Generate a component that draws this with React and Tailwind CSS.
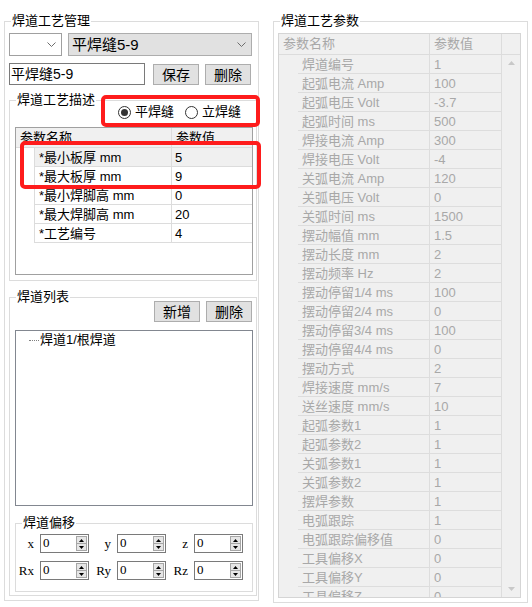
import React from "react";

const leftRows = [
  ["*最小板厚 mm", "5"],
  ["*最大板厚 mm", "9"],
  ["*最小焊脚高 mm", "0"],
  ["*最大焊脚高 mm", "20"],
  ["*工艺编号", "4"],
];

const rightRows = [
  ["焊道编号", "1"],
  ["起弧电流 Amp", "100"],
  ["起弧电压 Volt", "-3.7"],
  ["起弧时间 ms", "500"],
  ["焊接电流 Amp", "300"],
  ["焊接电压 Volt", "-4"],
  ["关弧电流 Amp", "120"],
  ["关弧电压 Volt", "0"],
  ["关弧时间 ms", "1500"],
  ["摆动幅值 mm", "1.5"],
  ["摆动长度 mm", "2"],
  ["摆动频率 Hz", "2"],
  ["摆动停留1/4 ms", "100"],
  ["摆动停留2/4 ms", "0"],
  ["摆动停留3/4 ms", "100"],
  ["摆动停留4/4 ms", "0"],
  ["摆动方式", "2"],
  ["焊接速度 mm/s", "7"],
  ["送丝速度 mm/s", "10"],
  ["起弧参数1", "1"],
  ["起弧参数2", "1"],
  ["关弧参数1", "1"],
  ["关弧参数2", "1"],
  ["摆焊参数", "1"],
  ["电弧跟踪", "1"],
  ["电弧跟踪偏移值", "0"],
  ["工具偏移X", "0"],
  ["工具偏移Y", "0"],
  ["工具偏移Z", "0"],
];

function Group({ title, className, children }) {
  return (
    <div className={`relative border border-[#dcdcdc] ${className}`}>
      <span className="absolute left-[6px] -top-[9px] bg-white px-[1px] text-[13px] leading-[16px] text-black">
        {title}
      </span>
      {children}
    </div>
  );
}

function Chevron() {
  return (
    <svg width="9" height="5" viewBox="0 0 9 5" className="shrink-0">
      <polyline points="0.5,0.5 4.5,4.5 8.5,0.5" fill="none" stroke="#6d6d6d" strokeWidth="1" />
    </svg>
  );
}

function Button({ children }) {
  return (
    <div className="w-[46px] h-[21px] bg-[#e1e1e1] border border-[#adadad] flex items-center justify-center text-[14px] leading-[18px]">
      {children}
    </div>
  );
}

function Spin({ label }) {
  return (
    <>
      <div className="text-right pr-[6px] font-['Liberation_Serif',serif] text-[13px] leading-[19px]" style={{ width: label.w }}>
        {label.t}
      </div>
      <div className="w-[49px] h-[19px] border border-[#7a7a7a] bg-white flex">
        <div className="flex-1 pl-[2px] text-[13px] leading-[16px] font-['Liberation_Serif',serif]">0</div>
        <div className="w-[11px] flex flex-col my-[1px] mr-[1px]">
          <div className="flex-1 bg-[#e6e6e6] border border-[#a6a6a6] flex items-center justify-center">
            <svg width="5" height="3" viewBox="0 0 5 3"><polygon points="2.5,0 5,3 0,3" fill="#000" /></svg>
          </div>
          <div className="flex-1 bg-[#e6e6e6] border border-[#a6a6a6] border-t-0 flex items-center justify-center">
            <svg width="5" height="3" viewBox="0 0 5 3"><polygon points="0,0 5,0 2.5,3" fill="#000" /></svg>
          </div>
        </div>
      </div>
    </>
  );
}

function Radio({ checked, label }) {
  return (
    <div className="flex items-center gap-[4px]">
      <div className="w-[13px] h-[13px] rounded-full border border-[#333] bg-white flex items-center justify-center">
        {checked && <div className="w-[7px] h-[7px] rounded-full bg-[#333]" />}
      </div>
      <span className="text-[13px] leading-[18px]">{label}</span>
    </div>
  );
}

export default function App() {
  return (
    <div className="relative w-[532px] h-[607px] overflow-hidden bg-white text-black font-['Liberation_Sans','Noto_Sans_CJK_SC',sans-serif] flex items-start gap-[14px] pl-[4px] pt-[21px]">
      {/* left panel */}
      <Group title="焊道工艺管理" className="w-[255px] h-[580px] shrink-0 pl-[4px] pt-[11px]">
        <div className="flex gap-[6px]">
          <div className="w-[53px] h-[23px] border border-[#a0a0a0] bg-white flex items-center justify-end pr-[5px]">
            <Chevron />
          </div>
          <div className="w-[184px] h-[23px] border border-[#adadad] bg-[#e1e1e1] flex items-center justify-between pl-[3px] pr-[5px]">
            <span className="text-[15px] leading-[18px]">平焊缝5-9</span>
            <Chevron />
          </div>
        </div>
        <div className="flex items-start mt-[7px]">
          <div className="w-[136px] h-[22px] border border-[#7a7a7a] bg-white pl-[1px] text-[14px] leading-[20px]">
            平焊缝5-9
          </div>
          <div className="flex gap-[6px] ml-[8px] mt-[1px]">
            <Button>保存</Button>
            <Button>删除</Button>
          </div>
        </div>

        <Group title="焊道工艺描述" className="w-[248px] h-[181px] mt-[15px]">
          <div className="flex gap-[11px] pl-[108px] mt-[2px] h-[18px] items-center">
            <Radio checked label="平焊缝" />
            <Radio label="立焊缝" />
          </div>
          <div className="ml-[5px] mt-[6px] w-[238px] h-[148px] border border-[#a0a0a0] bg-white text-[13px] leading-[19px]">
            <div className="flex h-[20px] bg-[#f0f0f0] border-b border-[#dcdcdc]">
              <div className="w-[156px] pl-[4px] border-r border-[#dcdcdc]">参数名称</div>
              <div className="flex-1 pl-[4px]">参数值</div>
            </div>
            {leftRows.map(([n, v], i) => (
              <div key={n} className="flex h-[19px]">
                <div className="w-[19px] border-r border-[#dcdcdc]" />
                <div className={`w-[137px] pl-[4px] border-r border-b border-[#dcdcdc] ${i === 0 ? "bg-[#f0f0f0]" : ""}`}>{n}</div>
                <div className={`flex-1 pl-[3px] border-b border-[#dcdcdc] ${i === 0 ? "bg-[#f0f0f0]" : ""}`}>{v}</div>
              </div>
            ))}
          </div>
        </Group>

        <Group title="焊道列表" className="w-[248px] h-[299px] mt-[16px]">
          <div className="flex justify-end gap-[6px] pr-[4px] mt-[3px]">
            <Button>新增</Button>
            <Button>删除</Button>
          </div>
          <div className="ml-[5px] mt-[8px] w-[238px] h-[176px] border border-[#828790] bg-white">
            <div className="flex items-center pl-[13px] h-[18px]">
              <div className="w-[10px] border-t border-dotted border-[#808080] mr-[1px]" />
              <span className="text-[13px] leading-[18px]">焊道1/根焊道</span>
            </div>
          </div>
          <Group title="焊道偏移" className="ml-[5px] mt-[17px] w-[238px] h-[69px]">
            <div className="grid grid-cols-[auto_auto_auto_auto_auto_auto] justify-start gap-y-[8px] mt-[10px]">
              <Spin label={{ t: "x", w: 24 }} />
              <Spin label={{ t: "y", w: 28 }} />
              <Spin label={{ t: "z", w: 28 }} />
              <Spin label={{ t: "Rx", w: 24 }} />
              <Spin label={{ t: "Ry", w: 28 }} />
              <Spin label={{ t: "Rz", w: 28 }} />
            </div>
          </Group>
        </Group>
      </Group>

      {/* right panel */}
      <Group title="焊道工艺参数" className="w-[255px] h-[582px] shrink-0 pl-[4px] pt-[11px]">
        <div className="w-[243px] h-[565px] border border-[#d5d5d5] bg-[#f0f0f0] text-[#a8a8a8] text-[13px] leading-[19px] overflow-hidden">
          <div className="flex h-[21px] border-b border-[#dcdcdc] leading-[20px]">
            <div className="w-[151px] pl-[4px] border-r border-[#dcdcdc]">参数名称</div>
            <div className="w-[72px] pl-[4px] border-r border-[#dcdcdc]">参数值</div>
            <div className="flex-1" />
          </div>
          <div className="flex">
            <div className="w-[223px]">
              {rightRows.map(([n, v]) => (
                <div key={n} className="flex h-[19px]">
                  <div className="w-[19px]" />
                  <div className="w-[132px] pl-[4px] border-r border-b border-[#dddddd]">{n}</div>
                  <div className="w-[72px] pl-[4px] border-r border-b border-[#dddddd]">{v}</div>
                </div>
              ))}
            </div>
            <div className="flex-1 h-[542px] flex flex-col justify-between items-center py-[6px]">
              <svg width="7" height="4" viewBox="0 0 7 4"><polygon points="3.5,0 7,4 0,4" fill="#c8c8c8" /></svg>
              <svg width="7" height="4" viewBox="0 0 7 4"><polygon points="0,0 7,0 3.5,4" fill="#c8c8c8" /></svg>
            </div>
          </div>
        </div>
      </Group>

      {/* annotation boxes */}
      <div className="absolute left-[101px] top-[95px] w-[159px] h-[32px] border-[4px] border-[#fe1c1c] rounded-[5px]" />
      <div className="absolute left-[20px] top-[141px] w-[241px] h-[48px] border-[4px] border-[#fe1c1c] rounded-[5px]" />
    </div>
  );
}
